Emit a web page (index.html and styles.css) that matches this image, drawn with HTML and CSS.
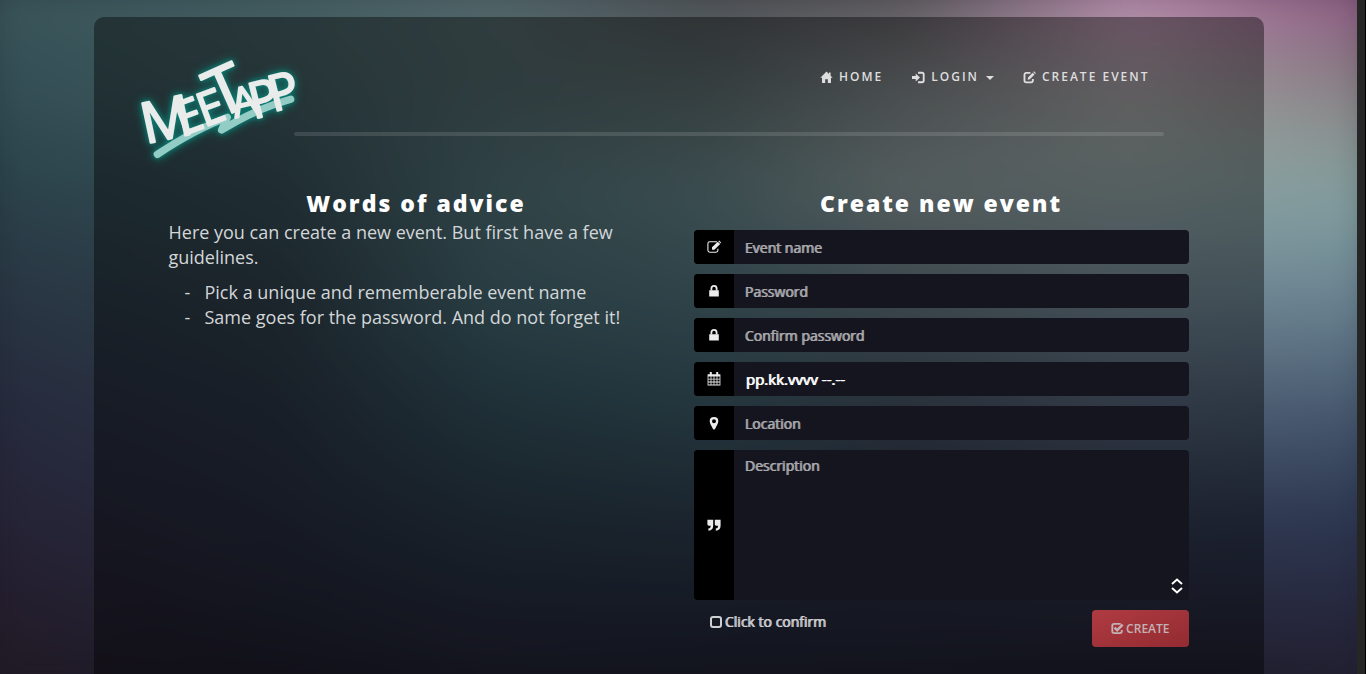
FILE: index.html
```html
<!DOCTYPE html>
<html lang="en">
<head>
<meta charset="utf-8">
<meta name="viewport" content="width=device-width, initial-scale=1">
<title>MeetApp - Create event</title>
<link rel="stylesheet" href="styles.css">
</head>
<body>
<svg class="sprite" aria-hidden="true">
  <symbol id="i-home" viewBox="0 0 14 14"><path d="M7 0.6 L0.4 7.2 H2.2 V13 H5.6 V9 H8.4 V13 H11.8 V7.2 H13.6 L11.4 5 V1.6 H9.6 V3.2 Z"/></symbol>
  <symbol id="i-login" viewBox="0 0 14 14"><path d="M0 5.4 H4 V2.8 L8.6 7 L4 11.2 V8.6 H0 Z"/><path d="M6.5 1.9 H10.8 Q12.6 1.9 12.6 3.7 V10.3 Q12.6 12.1 10.8 12.1 H6.5" fill="none" stroke="currentColor" stroke-width="2"/></symbol>
  <symbol id="i-new" viewBox="0 0 14 14"><path d="M8 2 H3.6 Q1.6 2 1.6 4 V10.2 Q1.6 12.2 3.6 12.2 H8.6 Q10.6 12.2 10.6 10.2 V8.6" fill="none" stroke="currentColor" stroke-width="2"/><path d="M5 9.4 L5.4 6.9 L10.4 1.9 L12.4 3.9 L7.4 8.9 Z M11 1.2 L11.9 0.3 L13.9 2.3 L13 3.2 Z"/></symbol>
  <symbol id="i-edit" viewBox="0 0 14 14"><path d="M10 1.8 H2.8 Q0.9 1.8 0.9 3.7 V10.3 Q0.9 12.2 2.8 12.2 H9 Q10.9 12.2 10.9 10.3 V8.8" fill="none" stroke="currentColor" stroke-width="1.1"/><path d="M5 9.8 V7.3 L10.7 1.8 L13.2 4.1 L7.4 9.8 Z M11.3 1.2 L12.2 0.4 L14 2.4 L13.8 3.4 Z"/></symbol>
  <symbol id="i-lock" viewBox="0 0 14 14"><path d="M2.2 6.2 H11.8 V12.6 H2.2 Z"/><path d="M4.4 6.6 V4.4 Q4.4 1.9 7 1.9 T9.6 4.4 V6.6" fill="none" stroke="currentColor" stroke-width="1.8"/></symbol>
  <symbol id="i-cal" viewBox="0 0 14 14"><path d="M0.6 2.2 H13.4 V13.4 H0.6 Z M2.8 0 H4.8 V3 H2.8 Z M9.2 0 H11.2 V3 H9.2 Z"/><path d="M1.4 4.6 h2.2 v2.1 h-2.2z M4.4 4.6 h2.2 v2.1 h-2.2z M7.4 4.6 h2.2 v2.1 h-2.2z M10.4 4.6 h2.2 v2.1 h-2.2z M1.4 7.5 h2.2 v2.1 h-2.2z M4.4 7.5 h2.2 v2.1 h-2.2z M7.4 7.5 h2.2 v2.1 h-2.2z M10.4 7.5 h2.2 v2.1 h-2.2z M1.4 10.4 h2.2 v2.1 h-2.2z M4.4 10.4 h2.2 v2.1 h-2.2z M7.4 10.4 h2.2 v2.1 h-2.2z M10.4 10.4 h2.2 v2.1 h-2.2z" fill="#000"/></symbol>
  <symbol id="i-pin" viewBox="0 0 14 14"><path fill-rule="evenodd" d="M7 1 Q11.3 1 11.3 5.2 Q11.3 6.5 10.6 8 L8 13 Q7 14 6 13 L3.4 8 Q2.7 6.5 2.7 5.2 Q2.7 1 7 1 Z M7 3.2 A2 2 0 1 0 7 7.2 A2 2 0 1 0 7 3.2 Z"/></symbol>
  <symbol id="i-quote" viewBox="0 0 14 14"><path d="M0.4 1.8 H6.2 V7.6 Q6.2 12.6 1.4 12.8 V10.6 Q3.7 10.4 3.8 7.8 H1.8 Q0.4 7.6 0.4 6.2 Z M7.8 1.8 H13.6 V7.6 Q13.6 12.6 8.8 12.8 V10.6 Q11.1 10.4 11.2 7.8 H9.2 Q7.8 7.6 7.8 6.2 Z"/></symbol>
  <symbol id="i-check" viewBox="0 0 14 14"><path d="M10.5 2 H3.4 Q1.4 2 1.4 4 V10 Q1.4 12 3.4 12 H9.6 Q11.6 12 11.6 10 V8.6" fill="none" stroke="currentColor" stroke-width="2"/><path d="M3.8 6 L6.6 8.8 L12.6 2.8" fill="none" stroke="currentColor" stroke-width="2.6"/></symbol>
</svg>

<div class="page">
  <div class="backdrop" aria-hidden="true">
    <div class="wash wash-1"></div>
    <div class="wash wash-2"></div>
    <div class="wash wash-3"></div>
    <div class="wash wash-4"></div>
    <div class="wash wash-5"></div>
    <div class="wash wash-6"></div>
    <div class="wash wash-7"></div>
  </div>

  <div class="panel">
    <header class="header">
      <a class="brand" href="#" aria-label="MeetApp">
        <svg class="logo" viewBox="0 0 540 390">
          <path class="logo-swash" d="M82 343 C150 298 230 255 292 232 L275 270 C340 230 420 195 482 178"/>
          <g class="logo-letters">
            <text transform="translate(46 312) rotate(-12)" font-size="170">M</text>
            <text transform="translate(156 288) rotate(-20)" font-size="140">E</text>
            <text transform="translate(222 262) rotate(-20)" font-size="140">E</text>
            <text transform="translate(264 238) rotate(-24)" font-size="200">T</text>
            <text transform="translate(316 234) rotate(-14)" font-size="120">A</text>
            <text transform="translate(370 238) rotate(-14)" font-size="150">P</text>
            <text transform="translate(428 216) rotate(-14)" font-size="150">P</text>
          </g>
        </svg>
      </a>
      <div class="header-main">
        <nav class="nav">
          <a href="#"><svg class="icon"><use href="#i-home"/></svg>Home</a>
          <a href="#"><svg class="icon"><use href="#i-login"/></svg>Login<span class="caret"></span></a>
          <a href="#"><svg class="icon"><use href="#i-new"/></svg>Create event</a>
        </nav>
        <div class="rule"></div>
      </div>
    </header>

    <main class="columns">
      <section class="advice">
        <h2>Words of advice</h2>
        <p>Here you can create a new event. But first have a few guidelines.</p>
        <ul>
          <li>Pick a unique and rememberable event name</li>
          <li>Same goes for the password. And do not forget it!</li>
        </ul>
      </section>

      <section class="create">
        <h2>Create new event</h2>
        <form class="form">
          <div class="field">
            <label for="name" aria-label="Event name"><svg class="icon"><use href="#i-edit"/></svg></label>
            <input id="name" type="text" placeholder="Event name">
          </div>
          <div class="field">
            <label for="pass" aria-label="Password"><svg class="icon"><use href="#i-lock"/></svg></label>
            <input id="pass" type="password" placeholder="Password">
          </div>
          <div class="field">
            <label for="pass2" aria-label="Confirm password"><svg class="icon"><use href="#i-lock"/></svg></label>
            <input id="pass2" type="password" placeholder="Confirm password">
          </div>
          <div class="field">
            <label for="date" aria-label="Date and time"><svg class="icon"><use href="#i-cal"/></svg></label>
            <input id="date" class="date" type="text" value="pp.kk.vvvv --.--">
          </div>
          <div class="field">
            <label for="location" aria-label="Location"><svg class="icon"><use href="#i-pin"/></svg></label>
            <input id="location" type="text" placeholder="Location">
          </div>
          <div class="field field-tall">
            <label for="description" aria-label="Description"><svg class="icon"><use href="#i-quote"/></svg></label>
            <textarea id="description" placeholder="Description"></textarea>
            <svg class="grip" viewBox="0 0 12 16" aria-hidden="true"><path d="M1 6 L6 1.6 L11 6 M1 10 L6 14.4 L11 10"/></svg>
          </div>
          <div class="actions">
            <label class="confirm"><input type="checkbox">Click to confirm</label>
            <button class="submit" type="submit"><svg class="icon"><use href="#i-check"/></svg>Create</button>
          </div>
        </form>
      </section>
    </main>
  </div>
</div>
<div class="scrollbar" aria-hidden="true"></div>
</body>
</html>
```
FILE: styles.css
```css
* { box-sizing: border-box; }

body {
  margin: 0;
  height: 100vh;
  display: flex;
  overflow: hidden;
  background: #15151f;
  color: #d3d6d8;
  font-family: "Open Sans", "Noto Sans", sans-serif;
  font-size: 14px;
}

h2, p, ul { margin: 0; padding: 0; }
a { color: inherit; text-decoration: none; }

.sprite { position: absolute; width: 0; height: 0; }
.icon { width: 14px; height: 14px; fill: currentColor; flex: none; }

.page {
  position: relative;
  flex: 1;
  min-width: 0;
  display: flex;
  justify-content: center;
  padding: 17px 15px 0;
  overflow: hidden;
}

.scrollbar {
  width: 9px;
  background: #262626;
  border-right: 1px solid #000;
}

/* Colour wash: vertical gradients that fade into one another from left to right */
.backdrop, .wash { position: absolute; inset: 0; }
.backdrop { inset: -30px; filter: blur(24px); }

.wash-1 { background: linear-gradient(rgb(60 86 91), rgb(50 78 84) 15%, rgb(42 65 74) 30%, rgb(40 52 66) 45%, rgb(38 42 60) 60%, rgb(38 34 54) 75%, rgb(36 28 42) 90%, rgb(33 26 36)); }
.wash-2 {
  background: linear-gradient(rgb(70 96 99), rgb(64 90 94) 15%, rgb(52 76 84) 30%, rgb(46 62 72) 45%, rgb(42 52 68) 60%, rgb(38 44 62) 75%, rgb(32 34 50) 90%, rgb(30 26 40));
  mask-image: linear-gradient(90deg, transparent, #000 22%);
}
.wash-3 {
  background: linear-gradient(rgb(84 104 108), rgb(78 100 104) 15%, rgb(80 112 118) 30%, rgb(68 104 114) 45%, rgb(52 80 92) 60%, rgb(42 58 72) 75%, rgb(36 40 58) 90%, rgb(32 32 48));
  mask-image: linear-gradient(90deg, transparent 22%, #000 37%);
}
.wash-4 {
  background: linear-gradient(rgb(76 76 80), rgb(88 102 104) 15%, rgb(100 130 134) 30%, rgb(78 112 122) 45%, rgb(60 90 102) 60%, rgb(46 62 78) 75%, rgb(34 40 58) 90%, rgb(32 32 48));
  mask-image: linear-gradient(90deg, transparent 37%, #000 52%);
}
.wash-5 {
  background: linear-gradient(rgb(84 76 82), rgb(122 128 130) 15%, rgb(142 158 160) 30%, rgb(98 116 126) 45%, rgb(66 80 96) 60%, rgb(48 52 72) 75%, rgb(34 38 56) 90%, rgb(32 32 48));
  mask-image: linear-gradient(90deg, transparent 52%, #000 66%);
}
.wash-6 {
  background: linear-gradient(rgb(184 138 172) 4%, rgb(162 158 160) 16%, rgb(152 166 164) 25%, rgb(128 150 158) 38%, rgb(84 100 120) 58%, rgb(50 58 80) 75%, rgb(36 38 56) 90%, rgb(30 28 42));
  mask-image: linear-gradient(90deg, transparent 66%, #000 82%);
}
.wash-7 {
  background: linear-gradient(rgb(136 88 126) 5%, rgb(132 108 126) 11%, rgb(134 130 132) 18%, rgb(132 148 146) 25%, rgb(126 156 158) 32%, rgb(104 130 144) 45%, rgb(70 88 110) 60%, rgb(44 56 82) 74%, rgb(38 38 60) 89%, rgb(34 30 46));
  mask-image: linear-gradient(90deg, transparent 82%, #000);
}

.panel {
  position: relative;
  width: 100%;
  max-width: 1170px;
  padding-top: 23px;
  border-radius: 10px 10px 0 0;
  background: rgb(0 0 0 / 40%);
}

.header { display: flex; padding: 0 100px 0 36px; }
.brand { flex: none; margin-right: -16px; }
.logo {
  display: block;
  width: 180px;
  height: 130px;
  overflow: visible;
  filter: drop-shadow(0 0 2px #0c7a70) drop-shadow(0 0 4px #0c7a70);
}
.logo-swash { fill: none; stroke: #93cbc5; stroke-width: 22; stroke-linecap: round; stroke-linejoin: round; }
.logo-letters {
  fill: #e9eceb;
  stroke: #e9eceb;
  stroke-width: 6;
  stroke-linejoin: round;
  font-family: "Liberation Sans Narrow", "Open Sans", sans-serif;
}

.header-main { flex: 1; padding-top: 27px; }
.nav {
  display: flex;
  justify-content: flex-end;
  gap: 29px;
  padding-right: 14px;
  font-size: 12px;
  font-weight: 600;
  line-height: 20px;
  letter-spacing: 2px;
  text-transform: uppercase;
  color: #dededf;
}
.nav a { display: flex; align-items: center; gap: 6px; }
.nav .icon { width: 13px; height: 13px; }
.caret {
  margin: 2px 0 0 1px;
  border: 4px solid transparent;
  border-top-color: currentColor;
  border-bottom: 0;
}
.rule {
  height: 4px;
  margin-top: 45px;
  border-radius: 2px;
  background: rgb(255 255 255 / 12%);
}

.columns {
  display: grid;
  grid-template-columns: 1fr 1fr;
  gap: 30px;
  padding: 20px 75px;
}

h2 {
  color: #fff;
  font-size: 23px;
  font-weight: 800;
  line-height: 26px;
  letter-spacing: 2px;
  text-align: center;
}

.advice { font-size: 18px; line-height: 25px; }
.advice p { margin: 4px 0 10px; }
.advice li { display: flex; padding-left: 16px; }
.advice li::before { content: "-"; flex: none; width: 20px; }

.form { display: grid; gap: 10px; margin-top: 14px; }
.field {
  position: relative;
  display: flex;
  min-height: 34px;
  border-radius: 4px;
  overflow: hidden;
  background: #15151f;
}
.field label {
  flex: none;
  width: 40px;
  display: grid;
  place-items: center;
  background: #000;
  color: #ececec;
}
.field input, .field textarea {
  flex: 1;
  min-width: 0;
  border: 0;
  outline: 0;
  padding: 0 11px;
  background: transparent;
  color: #fff;
  font: inherit;
  text-shadow: 1px 0 0 currentColor;
}
.field .date { padding: 0 12px; font-size: 15px; }
.field textarea { padding-top: 6px; resize: none; }
.field ::placeholder { color: #a9a9ac; opacity: 1; }
.field-tall { height: 150px; }
.grip {
  position: absolute;
  right: 6px;
  bottom: 6px;
  width: 12px;
  height: 16px;
  fill: none;
  stroke: #fff;
  stroke-width: 2;
}

.actions { display: flex; justify-content: space-between; align-items: flex-start; }
.confirm {
  display: flex;
  align-items: center;
  gap: 3px;
  padding-left: 16px;
  line-height: 24px;
  color: #cfcfd2;
  text-shadow: 1px 0 0 currentColor;
}
.confirm input {
  appearance: none;
  width: 12px;
  height: 12px;
  margin: 0;
  border: 2px solid #cfcfd2;
  border-radius: 3px;
}
.submit {
  display: flex;
  align-items: center;
  gap: 2px;
  height: 37px;
  padding: 0 19px;
  border: 0;
  border-radius: 4px;
  background: linear-gradient(160deg, #b03b42, #922b31);
  color: #c3b2b5;
  font: 600 12px/20px "Open Sans", sans-serif;
  text-transform: uppercase;
}
.submit .icon { width: 13px; height: 13px; }

@media (max-width: 900px) {
  .columns { grid-template-columns: 1fr; padding: 20px; }
  .header { padding-right: 20px; }
}
```
